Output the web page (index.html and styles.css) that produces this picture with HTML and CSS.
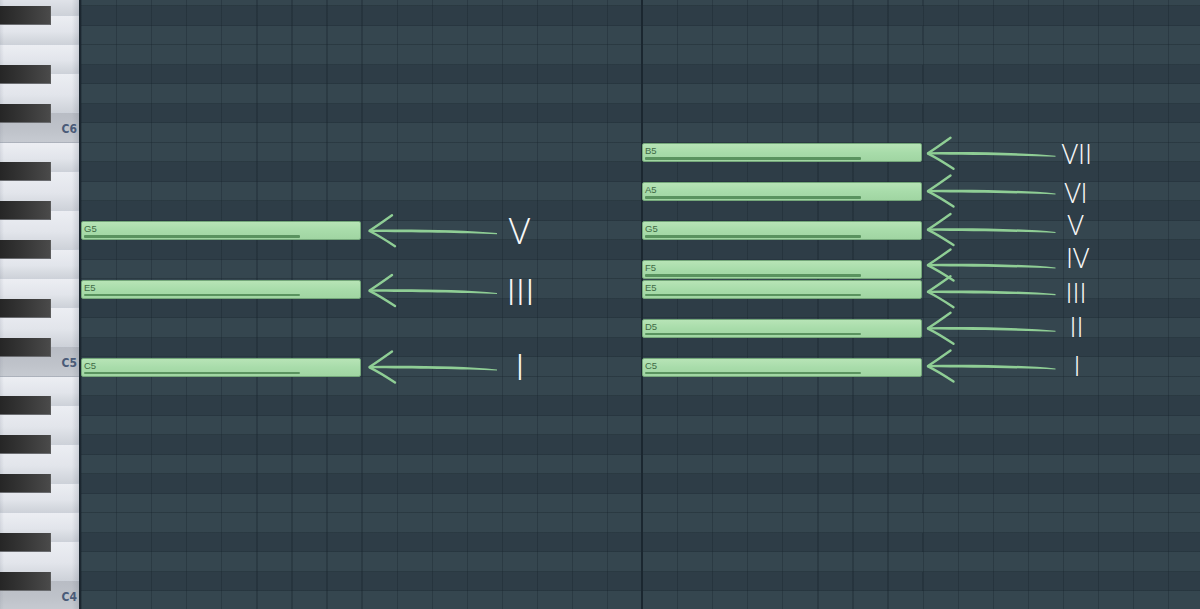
FILE: index.html
```html
<!DOCTYPE html>
<html>
<head>
<meta charset="utf-8">
<title>Piano roll – chords</title>
<link rel="stylesheet" href="styles.css">
</head>
<body>
<div class="app">
  <div class="piano">
    <div class="whites">
      <div class="wk k2"></div>
      <div class="wk k15"></div>
      <div class="wk k15"></div>
      <div class="wk k2"></div>
      <div class="wk k15 c"><span class="kl">C6</span></div>
      <div class="wk k15"></div>
      <div class="wk k2"></div>
      <div class="wk k2"></div>
      <div class="wk k15"></div>
      <div class="wk k15"></div>
      <div class="wk k2"></div>
      <div class="wk k15 c"><span class="kl">C5</span></div>
      <div class="wk k15"></div>
      <div class="wk k2"></div>
      <div class="wk k2"></div>
      <div class="wk k15"></div>
      <div class="wk k15"></div>
      <div class="wk k2"></div>
      <div class="wk k15 c"><span class="kl">C4</span></div>
    </div>
    <div class="blacks">
      <div class="pr"></div>
      <div class="pr"><div class="bk"></div></div>
      <div class="pr"></div>
      <div class="pr"></div>
      <div class="pr"><div class="bk"></div></div>
      <div class="pr"></div>
      <div class="pr"><div class="bk"></div></div>
      <div class="pr"></div>
      <div class="pr"></div>
      <div class="pr"><div class="bk"></div></div>
      <div class="pr"></div>
      <div class="pr"><div class="bk"></div></div>
      <div class="pr"></div>
      <div class="pr"><div class="bk"></div></div>
      <div class="pr"></div>
      <div class="pr"></div>
      <div class="pr"><div class="bk"></div></div>
      <div class="pr"></div>
      <div class="pr"><div class="bk"></div></div>
      <div class="pr"></div>
      <div class="pr"></div>
      <div class="pr"><div class="bk"></div></div>
      <div class="pr"></div>
      <div class="pr"><div class="bk"></div></div>
      <div class="pr"></div>
      <div class="pr"><div class="bk"></div></div>
      <div class="pr"></div>
      <div class="pr"></div>
      <div class="pr"><div class="bk"></div></div>
      <div class="pr"></div>
      <div class="pr"><div class="bk"></div></div>
      <div class="pr"></div>
    </div>
  </div>

  <div class="roll">
    <div class="row w"></div>
    <div class="row b"></div>
    <div class="row w"></div>
    <div class="row w"></div>
    <div class="row b"></div>
    <div class="row w"></div>
    <div class="row b"></div>
    <div class="row w"></div>
    <div class="row w">
      <div class="note r"><span class="nl">B5</span><i class="vel"></i></div>
    </div>
    <div class="row b"></div>
    <div class="row w">
      <div class="note r"><span class="nl">A5</span><i class="vel"></i></div>
    </div>
    <div class="row b"></div>
    <div class="row w">
      <div class="note l"><span class="nl">G5</span><i class="vel"></i></div>
      <div class="note r"><span class="nl">G5</span><i class="vel"></i></div>
    </div>
    <div class="row b"></div>
    <div class="row w">
      <div class="note r"><span class="nl">F5</span><i class="vel"></i></div>
    </div>
    <div class="row w">
      <div class="note l"><span class="nl">E5</span><i class="vel"></i></div>
      <div class="note r"><span class="nl">E5</span><i class="vel"></i></div>
    </div>
    <div class="row b"></div>
    <div class="row w">
      <div class="note r"><span class="nl">D5</span><i class="vel"></i></div>
    </div>
    <div class="row b"></div>
    <div class="row w">
      <div class="note l"><span class="nl">C5</span><i class="vel"></i></div>
      <div class="note r"><span class="nl">C5</span><i class="vel"></i></div>
    </div>
    <div class="row w"></div>
    <div class="row b"></div>
    <div class="row w"></div>
    <div class="row b"></div>
    <div class="row w"></div>
    <div class="row b"></div>
    <div class="row w"></div>
    <div class="row w"></div>
    <div class="row b"></div>
    <div class="row w"></div>
    <div class="row b"></div>
    <div class="row w"></div>
  </div>

  <svg class="annot" width="1200" height="609" viewBox="0 0 1200 609" xmlns="http://www.w3.org/2000/svg">
    <defs>
      <g id="arrow">
        <path class="shaft" d="M0,-1 C45,-1.7 95,-0.8 128,2.4 L128,3.5 C95,2 45,1.8 0,1.2 Z"/>
        <path class="head" d="M0.5,0 Q9,-5.5 23,-15.5 M0.5,0.3 Q11,5.5 26,15.5"/>
      </g>
    </defs>
    <use href="#arrow" x="369" y="230.7"/>
    <use href="#arrow" x="369" y="290.5"/>
    <use href="#arrow" x="369" y="367"/>
    <use href="#arrow" x="927.5" y="153.3"/>
    <use href="#arrow" x="927.5" y="191"/>
    <use href="#arrow" x="927.5" y="229.5"/>
    <use href="#arrow" x="927.5" y="265"/>
    <use href="#arrow" x="927.5" y="291.7"/>
    <use href="#arrow" x="927.5" y="328.3"/>
    <use href="#arrow" x="927.5" y="366"/>

    <text class="num big" x="519.5" y="243.5">V</text>
    <text class="num big" x="520.5" y="305">III</text>
    <text class="num big" x="520" y="380">I</text>

    <text class="num small" x="1077" y="164">VII</text>
    <text class="num small" x="1076" y="202.5">VI</text>
    <text class="num small" x="1075.5" y="234.5">V</text>
    <text class="num small" x="1077.5" y="268">IV</text>
    <text class="num small" x="1076" y="302.5">III</text>
    <text class="num small" x="1076.5" y="337">II</text>
    <text class="num small" x="1077" y="376">I</text>
  </svg>
</div>
</body>
</html>
```

FILE: styles.css
```css
html, body {
  margin: 0;
  padding: 0;
  background: #2f3e48;
}

.app {
  position: relative;
  display: flex;
  width: 1200px;
  height: 609px;
  overflow: hidden;
}

/* ---------- piano keyboard ---------- */
.piano {
  flex: none;
  width: 79px;
  height: 609px;
  border-right: 2px solid #1c2730;
  display: grid;
  grid-template-columns: 1fr;
  grid-template-rows: 1fr;
  overflow: hidden;
  background: #dfe2e8;
}

.whites,
.blacks {
  grid-area: 1 / 1;
  align-self: start;
  display: flex;
  flex-direction: column;
}

.whites {
  margin-top: -23.25px;
}

.blacks {
  margin-top: -13.5px;
}

.wk {
  flex: none;
  box-sizing: border-box;
  display: flex;
  justify-content: flex-end;
  align-items: flex-start;
  background:
    linear-gradient(to right, rgba(60, 70, 90, 0.10) 0, rgba(60, 70, 90, 0) 4px, rgba(60, 70, 90, 0) 72px, rgba(60, 70, 90, 0.16) 79px),
    linear-gradient(to bottom, #eceef3 0%, #e2e5eb 55%, #ced2d9 100%);
  border-bottom: 1px solid rgba(150, 158, 172, 0.35);
}

.k2 { height: 39px; }
.k15 { height: 29.25px; }

.wk.c {
  background:
    linear-gradient(to right, rgba(60, 70, 90, 0.08) 0, rgba(60, 70, 90, 0) 4px, rgba(60, 70, 90, 0) 72px, rgba(60, 70, 90, 0.14) 79px),
    linear-gradient(to bottom, #b8bcc4 0%, #bfc3ca 60%, #c6cad1 100%);
}

.kl {
  margin-top: 9.8px;
  margin-right: 2px;
  font-family: "DejaVu Sans Condensed", "Liberation Sans Narrow", "Liberation Sans", sans-serif;
  font-weight: bold;
  font-size: 12px;
  line-height: 12px;
  color: #4a5b78;
}

.pr {
  flex: none;
  height: 19.5px;
}

.bk {
  width: 51px;
  height: 19px;
  margin-top: 0.3px;
  box-sizing: border-box;
  background: linear-gradient(to right, #262626 0%, #353535 45%, #4a4a4a 100%);
  border-right: 1px solid #5a5a5a;
  border-bottom: 1px solid #6a6c70;
}

/* ---------- note grid ---------- */
.roll {
  flex: 1;
  display: flex;
  flex-direction: column;
  margin-top: -13.5px;
}

.row {
  flex: none;
  height: 19.5px;
  box-sizing: border-box;
  display: grid;
  grid-template-columns: repeat(32, 35.0625px);
  grid-template-rows: 19.5px;
}

.row.w {
  background:
    linear-gradient(to right, rgba(0, 0, 0, 0) 560px, #1b2730 560px, #1b2730 561.6px, rgba(0, 0, 0, 0) 561.6px),
    linear-gradient(to top, rgba(22, 34, 42, 0.35) 0, rgba(22, 34, 42, 0.35) 1px, rgba(0, 0, 0, 0) 1px),
    repeating-linear-gradient(to right, rgba(22, 34, 42, 0.32) 0, rgba(22, 34, 42, 0.32) 1.2px, rgba(0, 0, 0, 0) 1.2px, rgba(0, 0, 0, 0) 35.0625px),
    #35464f;
}

.row.b {
  background:
    linear-gradient(to right, rgba(0, 0, 0, 0) 560px, #1b2730 560px, #1b2730 561.6px, rgba(0, 0, 0, 0) 561.6px),
    linear-gradient(to top, rgba(22, 34, 42, 0.25) 0, rgba(22, 34, 42, 0.25) 1px, rgba(0, 0, 0, 0) 1px),
    repeating-linear-gradient(to right, rgba(22, 34, 42, 0.32) 0, rgba(22, 34, 42, 0.32) 1.2px, rgba(0, 0, 0, 0) 1.2px, rgba(0, 0, 0, 0) 35.0625px),
    #2e3d47;
}

.note {
  grid-row: 1;
  box-sizing: border-box;
  width: calc(100% - 1px);
  height: 19px;
  margin-top: 0.5px;
  display: flex;
  flex-direction: column;
  justify-content: space-between;
  padding: 2px 2px 1.5px 2px;
  border: 1px solid #74a77a;
  border-radius: 2px;
  background: linear-gradient(to bottom, #b7e4b6 0%, #a8dcaa 50%, #a0d5a2 100%);
}

.note.l { grid-column: 1 / span 8; }
.note.r { grid-column: 17 / span 8; }

.nl {
  font-family: "Liberation Sans", Arial, sans-serif;
  font-size: 9.5px;
  line-height: 10px;
  color: #3f6a45;
}

.vel {
  display: block;
  width: 216px;
  height: 2.4px;
  background: #5a935f;
  border-radius: 1px;
}

/* ---------- annotations ---------- */
.annot {
  position: absolute;
  left: 0;
  top: 0;
  pointer-events: none;
}

.shaft {
  fill: #8fce95;
}

.head {
  fill: none;
  stroke: #8fce95;
  stroke-width: 2.4;
  stroke-linecap: round;
}

.num {
  font-family: "Open Sans", "Lato", "DejaVu Sans", sans-serif;
  font-weight: 350;
  fill: #f7f7f7;
  text-anchor: middle;
}

.big { font-size: 37px; }
.small { font-size: 28px; }
```
